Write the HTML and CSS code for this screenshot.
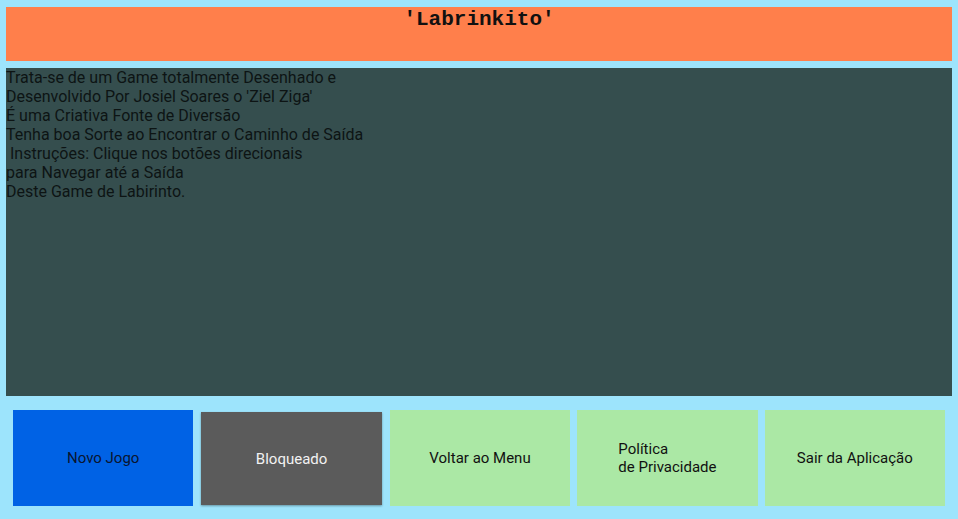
FILE: index.html
```html
<!DOCTYPE html>
<html lang="pt">
<head>
<meta charset="utf-8">
<title>Labrinkito</title>
<link rel="stylesheet" href="styles.css">
</head>
<body>
<div class="app">
  <header class="title-bar">
    <h1 class="title">'Labrinkito'</h1>
  </header>
  <main class="info">
    <p class="info-text">Trata-se de um Game totalmente Desenhado e<br>Desenvolvido Por Josiel Soares o 'Ziel Ziga'<br>É uma Criativa Fonte de Diversão<br>Tenha boa Sorte ao Encontrar o Caminho de Saída<br>&nbsp;Instruções: Clique nos botões direcionais<br>para Navegar até a Saída<br>Deste Game de Labirinto.</p>
  </main>
  <nav class="actions">
    <button class="btn btn-blue">Novo Jogo</button>
    <button class="btn btn-gray">Bloqueado</button>
    <button class="btn btn-green">Voltar ao Menu</button>
    <button class="btn btn-green btn-left"><span>Política<br>de Privacidade</span></button>
    <button class="btn btn-green">Sair da Aplicação</button>
  </nav>
</div>
</body>
</html>
```
FILE: styles.css
```css
* { box-sizing: border-box; }
html, body {
  margin: 0;
  padding: 0;
  width: 958px;
  height: 519px;
  overflow: hidden;
  background: #9de4fc;
  font-family: Roboto, "Noto Sans", sans-serif;
}
.app {
  display: flex;
  flex-direction: column;
  padding: 7px 6px 0 6px;
  height: 519px;
}
.title-bar {
  height: 54px;
  background: #ff7f4b;
  display: flex;
  justify-content: center;
  align-items: flex-start;
}
.title {
  margin: 0;
  padding-top: 1px;
  font-family: "Liberation Mono", "Courier New", monospace;
  font-weight: bold;
  font-size: 21px;
  line-height: 24px;
  color: #111;
}
.info {
  margin-top: 7px;
  height: 328px;
  background: #354e4e;
  padding-top: 0;
}
.info-text {
  margin: 0;
  font-size: 16px;
  line-height: 19px;
  color: #0d1414;
}
.actions {
  margin-top: 14px;
  padding: 0 7px;
  display: flex;
  gap: 7px;
  height: 96px;
}
.btn {
  flex: 1 1 0;
  border: none;
  margin: 0;
  padding: 0;
  font-family: Roboto, "Noto Sans", sans-serif;
  font-size: 15px;
  line-height: 18px;
  display: flex;
  align-items: center;
  justify-content: center;
  text-align: center;
}
.btn-blue {
  background: #0062e5;
  color: #0a1530;
}
.btn-gray {
  background: #5b5b5b;
  color: #f2f2f2;
  margin: 2px 1px 1px 1px;
  box-shadow: 0 1px 2px rgba(0, 0, 0, 0.35);
}
.btn-green {
  background: #abe8a5;
  color: #111;
}
.btn-left span {
  text-align: left;
  display: block;
}
```
